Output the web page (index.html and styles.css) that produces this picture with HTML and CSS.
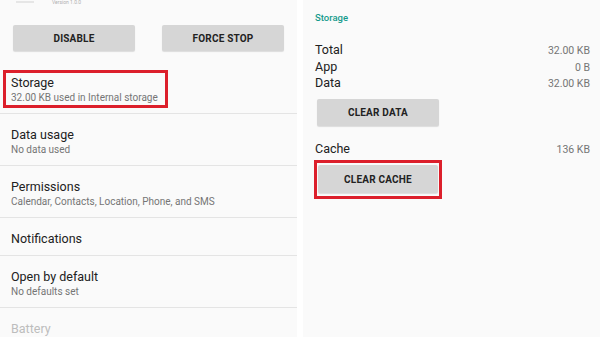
FILE: index.html
```html
<!DOCTYPE html>
<html>
<head>
<meta charset="utf-8">
<link rel="stylesheet" href="styles.css">
</head>
<body>
<div class="screen">
  <div class="panel left">
    <div class="topcut">
      <div class="topicon"></div>
      <div class="toptext">Version 1.0.0</div>
    </div>
    <div class="btnrow">
      <div class="btn">DISABLE</div>
      <div class="btn">FORCE STOP</div>
    </div>
    <div class="row two first">
      <div class="title">Storage</div>
      <div class="sub">32.00 KB used in Internal storage</div>
      <div class="mark markstorage"></div>
    </div>
    <div class="row two">
      <div class="title">Data usage</div>
      <div class="sub">No data used</div>
    </div>
    <div class="row two">
      <div class="title">Permissions</div>
      <div class="sub">Calendar, Contacts, Location, Phone, and SMS</div>
    </div>
    <div class="row one">
      <div class="title">Notifications</div>
    </div>
    <div class="row two">
      <div class="title">Open by default</div>
      <div class="sub">No defaults set</div>
    </div>
    <div class="row one nob">
      <div class="title dim">Battery</div>
    </div>
  </div>
  <div class="panel right">
    <div class="heading">Storage</div>
    <div class="stats">
      <div class="stat"><span class="lbl">Total</span><span class="val">32.00 KB</span></div>
      <div class="stat"><span class="lbl">App</span><span class="val">0 B</span></div>
      <div class="stat"><span class="lbl">Data</span><span class="val">32.00 KB</span></div>
    </div>
    <div class="btn rbtn">CLEAR DATA</div>
    <div class="stat cache"><span class="lbl">Cache</span><span class="val">136 KB</span></div>
    <div class="markwrap">
      <div class="btn rbtn inbox">CLEAR CACHE</div>
    </div>
  </div>
</div>
</body>
</html>
```
FILE: styles.css
```css
html, body {
  margin: 0;
  padding: 0;
  background: #ffffff;
  font-family: Roboto, "Noto Sans", Arial, sans-serif;
}
.screen {
  display: flex;
  width: 600px;
  height: 337px;
  overflow: hidden;
  gap: 6px;
  background: #ffffff;
}
.panel {
  background: #fafafa;
  height: 337px;
  overflow: hidden;
}
.left {
  width: 297px;
}
.right {
  flex: 1;
  padding: 11px 10px 0 12px;
  box-sizing: border-box;
}
.topcut {
  height: 5px;
  display: flex;
  align-items: flex-end;
  padding-left: 16px;
  gap: 18px;
  overflow: hidden;
}
.topicon {
  width: 18px;
  height: 14px;
  border-bottom: 2px solid #e6e6e6;
  flex: none;
  margin-bottom: 2px;
}
.toptext {
  font-size: 5px;
  line-height: 5px;
  color: #b0b0b0;
}
.btnrow {
  display: flex;
  gap: 27px;
  padding-left: 13px;
  margin-top: 20px;
}
.btn {
  width: 122px;
  height: 26px;
  background: #d6d6d6;
  border-radius: 2px;
  box-shadow: 0 1px 1px rgba(0,0,0,0.12);
  display: flex;
  align-items: center;
  justify-content: center;
  font-size: 10px;
  font-weight: 700;
  color: #222222;
  letter-spacing: 0.2px;
}
.row {
  position: relative;
  padding: 13px 0 8px 11px;
  border-bottom: 1px solid #e4e4e4;
}
.row.first {
  margin-top: 11px;
}
.row.nob {
  border-bottom: none;
}
.title {
  font-size: 12.5px;
  line-height: 16px;
  color: #212121;
}
.title.dim {
  color: #bdbdbd;
}
.sub {
  font-size: 10px;
  line-height: 14px;
  color: #757575;
}
.mark {
  position: absolute;
  border: 3px solid #dc1f2b;
  box-sizing: border-box;
}
.markstorage {
  left: 3px;
  top: 8px;
  width: 165px;
  height: 38px;
}
.heading {
  font-size: 9.5px;
  line-height: 14px;
  font-weight: 500;
  color: #159a8c;
}
.stats {
  margin-top: 17px;
}
.stat {
  display: flex;
  justify-content: space-between;
  align-items: baseline;
  height: 16.5px;
  line-height: 16px;
}
.lbl {
  font-size: 12.5px;
  color: #212121;
}
.val {
  font-size: 10.5px;
  color: #757575;
}
.rbtn {
  margin-left: 2px;
  height: 27px;
  margin-top: 7px;
}
.cache {
  margin-top: 15px;
}
.markwrap {
  margin-top: 3px;
  margin-left: -1px;
  width: 128px;
  height: 39px;
  box-sizing: border-box;
  border: 3px solid #dc1f2b;
  padding: 2px 0 0 1px;
}
.rbtn.inbox {
  margin: 0;
  width: 120px;
  height: 28px;
}
```
